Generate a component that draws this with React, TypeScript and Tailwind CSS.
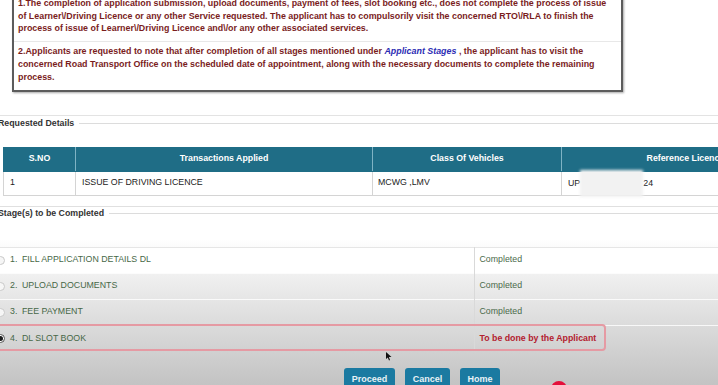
import React from "react";

const stages = [
  { no: "1.", name: "FILL APPLICATION DETAILS DL", status: "Completed", done: true },
  { no: "2.", name: "UPLOAD DOCUMENTS", status: "Completed", done: true },
  { no: "3.", name: "FEE PAYMENT", status: "Completed", done: true },
  { no: "4.", name: "DL SLOT BOOK", status: "To be done by the Applicant", done: false },
];

function Legend({ title }: { title: string }) {
  return (
    <div className="flex items-center h-[14px]">
      <span className="-ml-[2px] font-bold text-[#333] text-[8.8px] whitespace-nowrap">{title}</span>
      <div className="flex-1 h-px bg-[#dcdcdc] ml-[5px]" />
    </div>
  );
}

export default function App() {
  return (
    <div className="relative w-[718px] h-[385px] overflow-hidden bg-linear-to-b from-white from-[62%] to-[#c3c3c3] font-['Liberation_Sans',Arial,sans-serif]">
      {/* notice box */}
      <div className="-mt-[12px] ml-[12px] w-[611px] border-2 border-[#5c5c5c] bg-white shadow-[1px_1px_2px_rgba(0,0,0,0.35)] text-[#7a1d1d] font-bold text-[8.9px]">
        <div className="pl-[4px] pr-[8px] pt-[7px] pb-[6px] leading-[12.5px]">
          1.The completion of application submission, upload documents, payment of fees, slot booking etc., does not complete the process of issue of {"Learner\\/Driving"} Licence or any other Service requested. The applicant has to compulsorily visit the concerned {"RTO\\/RLA"} to finish the process of issue of {"Learner\\/Driving"} Licence {"and\\/or"} any other associated services.
        </div>
        <div className="border-t border-[#e8e8e8] pl-[4px] pr-[8px] pt-[3px] pb-[6px] leading-[13px]">
          2.Applicants are requested to note that after completion of all stages mentioned under{" "}
          <span className="italic text-[#2b2bb3]">Applicant Stages</span> , the applicant has to visit the concerned Road Transport Office on the scheduled date of appointment, along with the necessary documents to complete the remaining process.
        </div>
      </div>

      <div className="mt-[23px] h-px bg-[#e3e3e3]" />
      <div className="mt-px">
        <Legend title="Requested Details" />
      </div>

      {/* requested details table */}
      <table className="mt-[16px] ml-[3px] table-fixed w-[820px] border-collapse text-[8.8px]">
        <thead>
          <tr className="h-[24px] bg-[#1f6d86] text-white font-bold">
            <th className="w-[72px] border border-[#1f6d86] border-r-[#7fb3c4] font-bold">S.NO</th>
            <th className="w-[297px] border border-[#1f6d86] border-r-[#7fb3c4] font-bold">Transactions Applied</th>
            <th className="w-[189px] border border-[#1f6d86] border-r-[#7fb3c4] font-bold">Class Of Vehicles</th>
            <th className="w-[262px] border border-[#1f6d86] font-bold">Reference Licence No</th>
          </tr>
        </thead>
        <tbody>
          <tr className="h-[24px] bg-white text-[#222]">
            <td className="border border-[#d4d4d4] pl-[6px]">1</td>
            <td className="border border-[#d4d4d4] pl-[6px]">ISSUE OF DRIVING LICENCE</td>
            <td className="border border-[#d4d4d4] pl-[5px]">MCWG ,LMV</td>
            <td className="border border-[#d4d4d4] pl-[6px] whitespace-nowrap">
              UP
              <span className="inline-block align-middle w-[63px] h-[27px] -my-[2px] bg-[#f2f2f2] blur-[1.5px]" />
              24
            </td>
          </tr>
        </tbody>
      </table>

      <div className="mt-[10px] h-px bg-[#e0e0e0]" />
      <Legend title="Stage(s) to be Completed" />

      {/* stages */}
      <div className="relative mt-[26px] -ml-[10px]">
        <table className="table-fixed w-[740px] border-collapse text-[8.8px]">
          <tbody>
            {stages.map((s, i) => (
              <tr key={s.no} className={`h-[26px] ${i === 0 ? "border-t border-[#e6e6e6] bg-white" : "border-t border-white/80"}`}>
                <td className="w-[484px] pl-[6px]">
                  <div className="flex items-center text-[#476847]">
                    {s.done ? (
                      <span className="w-[9px] h-[9px] rounded-full border border-[#c9c9c9] bg-[#f6f6f6]" />
                    ) : (
                      <span className="w-[9px] h-[9px] rounded-full border border-[#555] bg-white flex items-center justify-center">
                        <span className="w-[5px] h-[5px] rounded-full bg-[#1e1e1e]" />
                      </span>
                    )}
                    <span className="ml-[5px] w-[12px]">{s.no}</span>
                    <span>{s.name}</span>
                  </div>
                </td>
                <td className="border-l border-[#d9d9d9] pl-[5px]">
                  {s.done ? (
                    <span className="text-[#4a6a4a]">{s.status}</span>
                  ) : (
                    <span className="font-bold text-[#b3212f]">{s.status}</span>
                  )}
                </td>
              </tr>
            ))}
          </tbody>
        </table>
        <div className="absolute left-0 top-[77px] w-[616px] h-[27px] border-2 border-[#e59aa3] rounded-[4px]" />
      </div>

      {/* buttons */}
      <div className="mt-[17px] ml-[344px] flex gap-[10px] text-[9px] font-bold text-[#e8f2f6]">
        <button className="w-[51px] h-[24px] rounded-[3px] bg-[#1b7aa1]">Proceed</button>
        <button className="w-[45px] h-[24px] rounded-[3px] bg-[#1b7aa1]">Cancel</button>
        <button className="w-[40px] h-[24px] rounded-[3px] bg-[#1b7aa1]">Home</button>
      </div>

      {/* cursor */}
      <svg className="absolute left-[386px] top-[352px]" width="6" height="9" viewBox="0 0 6 9">
        <path d="M0 0 L0 7 L1.8 5.4 L3 8.5 L4 8 L2.9 5 L5.5 5 Z" fill="#111" />
      </svg>

      {/* red marker */}
      <div className="absolute left-[551px] top-[381px] w-[16px] h-[16px] rounded-full bg-[#e4103b]" />
    </div>
  );
}
